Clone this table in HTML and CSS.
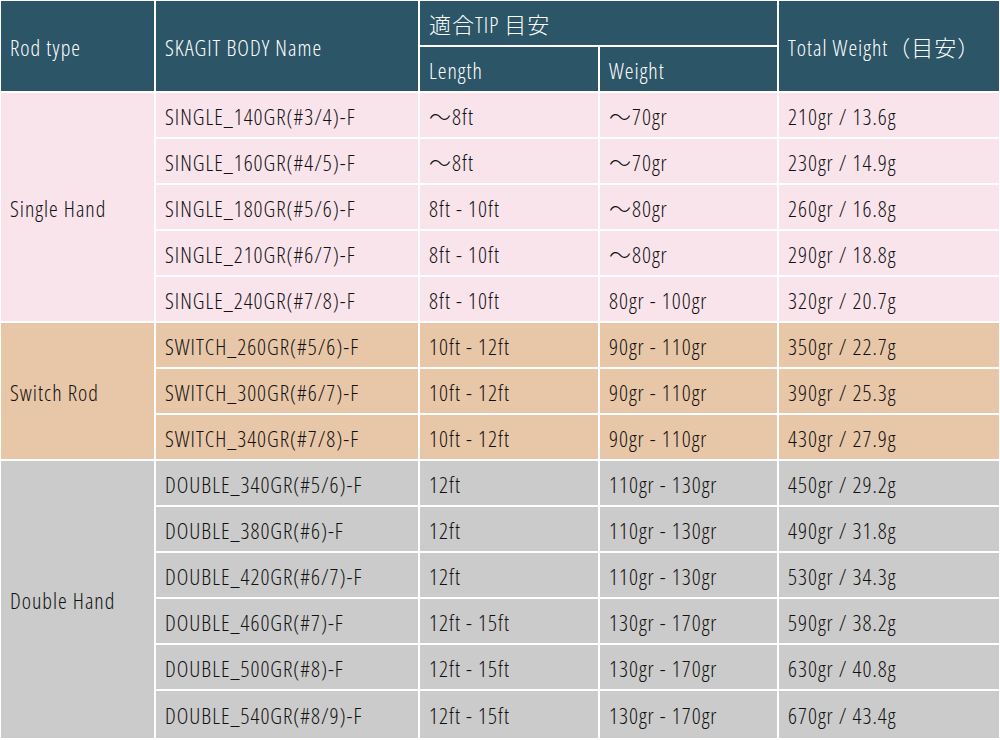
FILE: index.html
```html
<!DOCTYPE html>
<html lang="ja">
<head>
<meta charset="utf-8">
<title>SKAGIT BODY</title>
<link rel="stylesheet" href="styles.css">
</head>
<body>
<table class="spec">
  <colgroup>
    <col class="c1"><col class="c2"><col class="c3"><col class="c4"><col class="c5">
  </colgroup>
  <thead>
    <tr>
      <th rowspan="2">Rod type</th>
      <th rowspan="2">SKAGIT BODY Name</th>
      <th colspan="2">適合TIP 目安</th>
      <th rowspan="2">Total Weight（目安）</th>
    </tr>
    <tr>
      <th>Length</th>
      <th>Weight</th>
    </tr>
  </thead>
  <tbody class="single">
    <tr><td rowspan="5">Single Hand</td><td>SINGLE_140GR(#3/4)-F</td><td>～8ft</td><td>～70gr</td><td>210gr / 13.6g</td></tr>
    <tr><td>SINGLE_160GR(#4/5)-F</td><td>～8ft</td><td>～70gr</td><td>230gr / 14.9g</td></tr>
    <tr><td>SINGLE_180GR(#5/6)-F</td><td>8ft - 10ft</td><td>～80gr</td><td>260gr / 16.8g</td></tr>
    <tr><td>SINGLE_210GR(#6/7)-F</td><td>8ft - 10ft</td><td>～80gr</td><td>290gr / 18.8g</td></tr>
    <tr><td>SINGLE_240GR(#7/8)-F</td><td>8ft - 10ft</td><td>80gr - 100gr</td><td>320gr / 20.7g</td></tr>
  </tbody>
  <tbody class="switch">
    <tr><td rowspan="3">Switch Rod</td><td>SWITCH_260GR(#5/6)-F</td><td>10ft - 12ft</td><td>90gr - 110gr</td><td>350gr / 22.7g</td></tr>
    <tr><td>SWITCH_300GR(#6/7)-F</td><td>10ft - 12ft</td><td>90gr - 110gr</td><td>390gr / 25.3g</td></tr>
    <tr><td>SWITCH_340GR(#7/8)-F</td><td>10ft - 12ft</td><td>90gr - 110gr</td><td>430gr / 27.9g</td></tr>
  </tbody>
  <tbody class="double">
    <tr><td rowspan="6">Double Hand</td><td>DOUBLE_340GR(#5/6)-F</td><td>12ft</td><td>110gr - 130gr</td><td>450gr / 29.2g</td></tr>
    <tr><td>DOUBLE_380GR(#6)-F</td><td>12ft</td><td>110gr - 130gr</td><td>490gr / 31.8g</td></tr>
    <tr><td>DOUBLE_420GR(#6/7)-F</td><td>12ft</td><td>110gr - 130gr</td><td>530gr / 34.3g</td></tr>
    <tr><td>DOUBLE_460GR(#7)-F</td><td>12ft - 15ft</td><td>130gr - 170gr</td><td>590gr / 38.2g</td></tr>
    <tr><td>DOUBLE_500GR(#8)-F</td><td>12ft - 15ft</td><td>130gr - 170gr</td><td>630gr / 40.8g</td></tr>
    <tr class="last"><td>DOUBLE_540GR(#8/9)-F</td><td>12ft - 15ft</td><td>130gr - 170gr</td><td>670gr / 43.4g</td></tr>
  </tbody>
</table>
</body>
</html>
```

FILE: styles.css
```css
html, body {
  margin: 0;
  padding: 0;
  background: #ffffff;
  overflow: hidden;
}

.spec {
  margin: -1px 0 0 -1px;
  width: 1002px;
  table-layout: fixed;
  border-collapse: separate;
  border-spacing: 2px;
  font-family: "Open Sans", "Noto Sans CJK JP", sans-serif;
  font-stretch: 75%;
  font-weight: 300;
  font-size: 22px;
  letter-spacing: 1px;
  color: #111111;
}

.c1 { width: 153px; }
.c2 { width: 262px; }
.c3 { width: 178px; }
.c4 { width: 177px; }
.c5 { width: 220px; }

.spec th,
.spec td {
  height: 44px;
  padding: 1px 0 0 9px;
  text-align: left;
  vertical-align: middle;
  white-space: nowrap;
  box-sizing: border-box;
  line-height: 24px;
}

.spec th {
  background: #2c5567;
  color: #ffffff;
  font-weight: 300;
}

.single td { background: #f9e4ec; }
.switch td { background: #e8c7a8; }
.double td { background: #cbcbcb; }

.spec .last td { height: 47px; }
```
